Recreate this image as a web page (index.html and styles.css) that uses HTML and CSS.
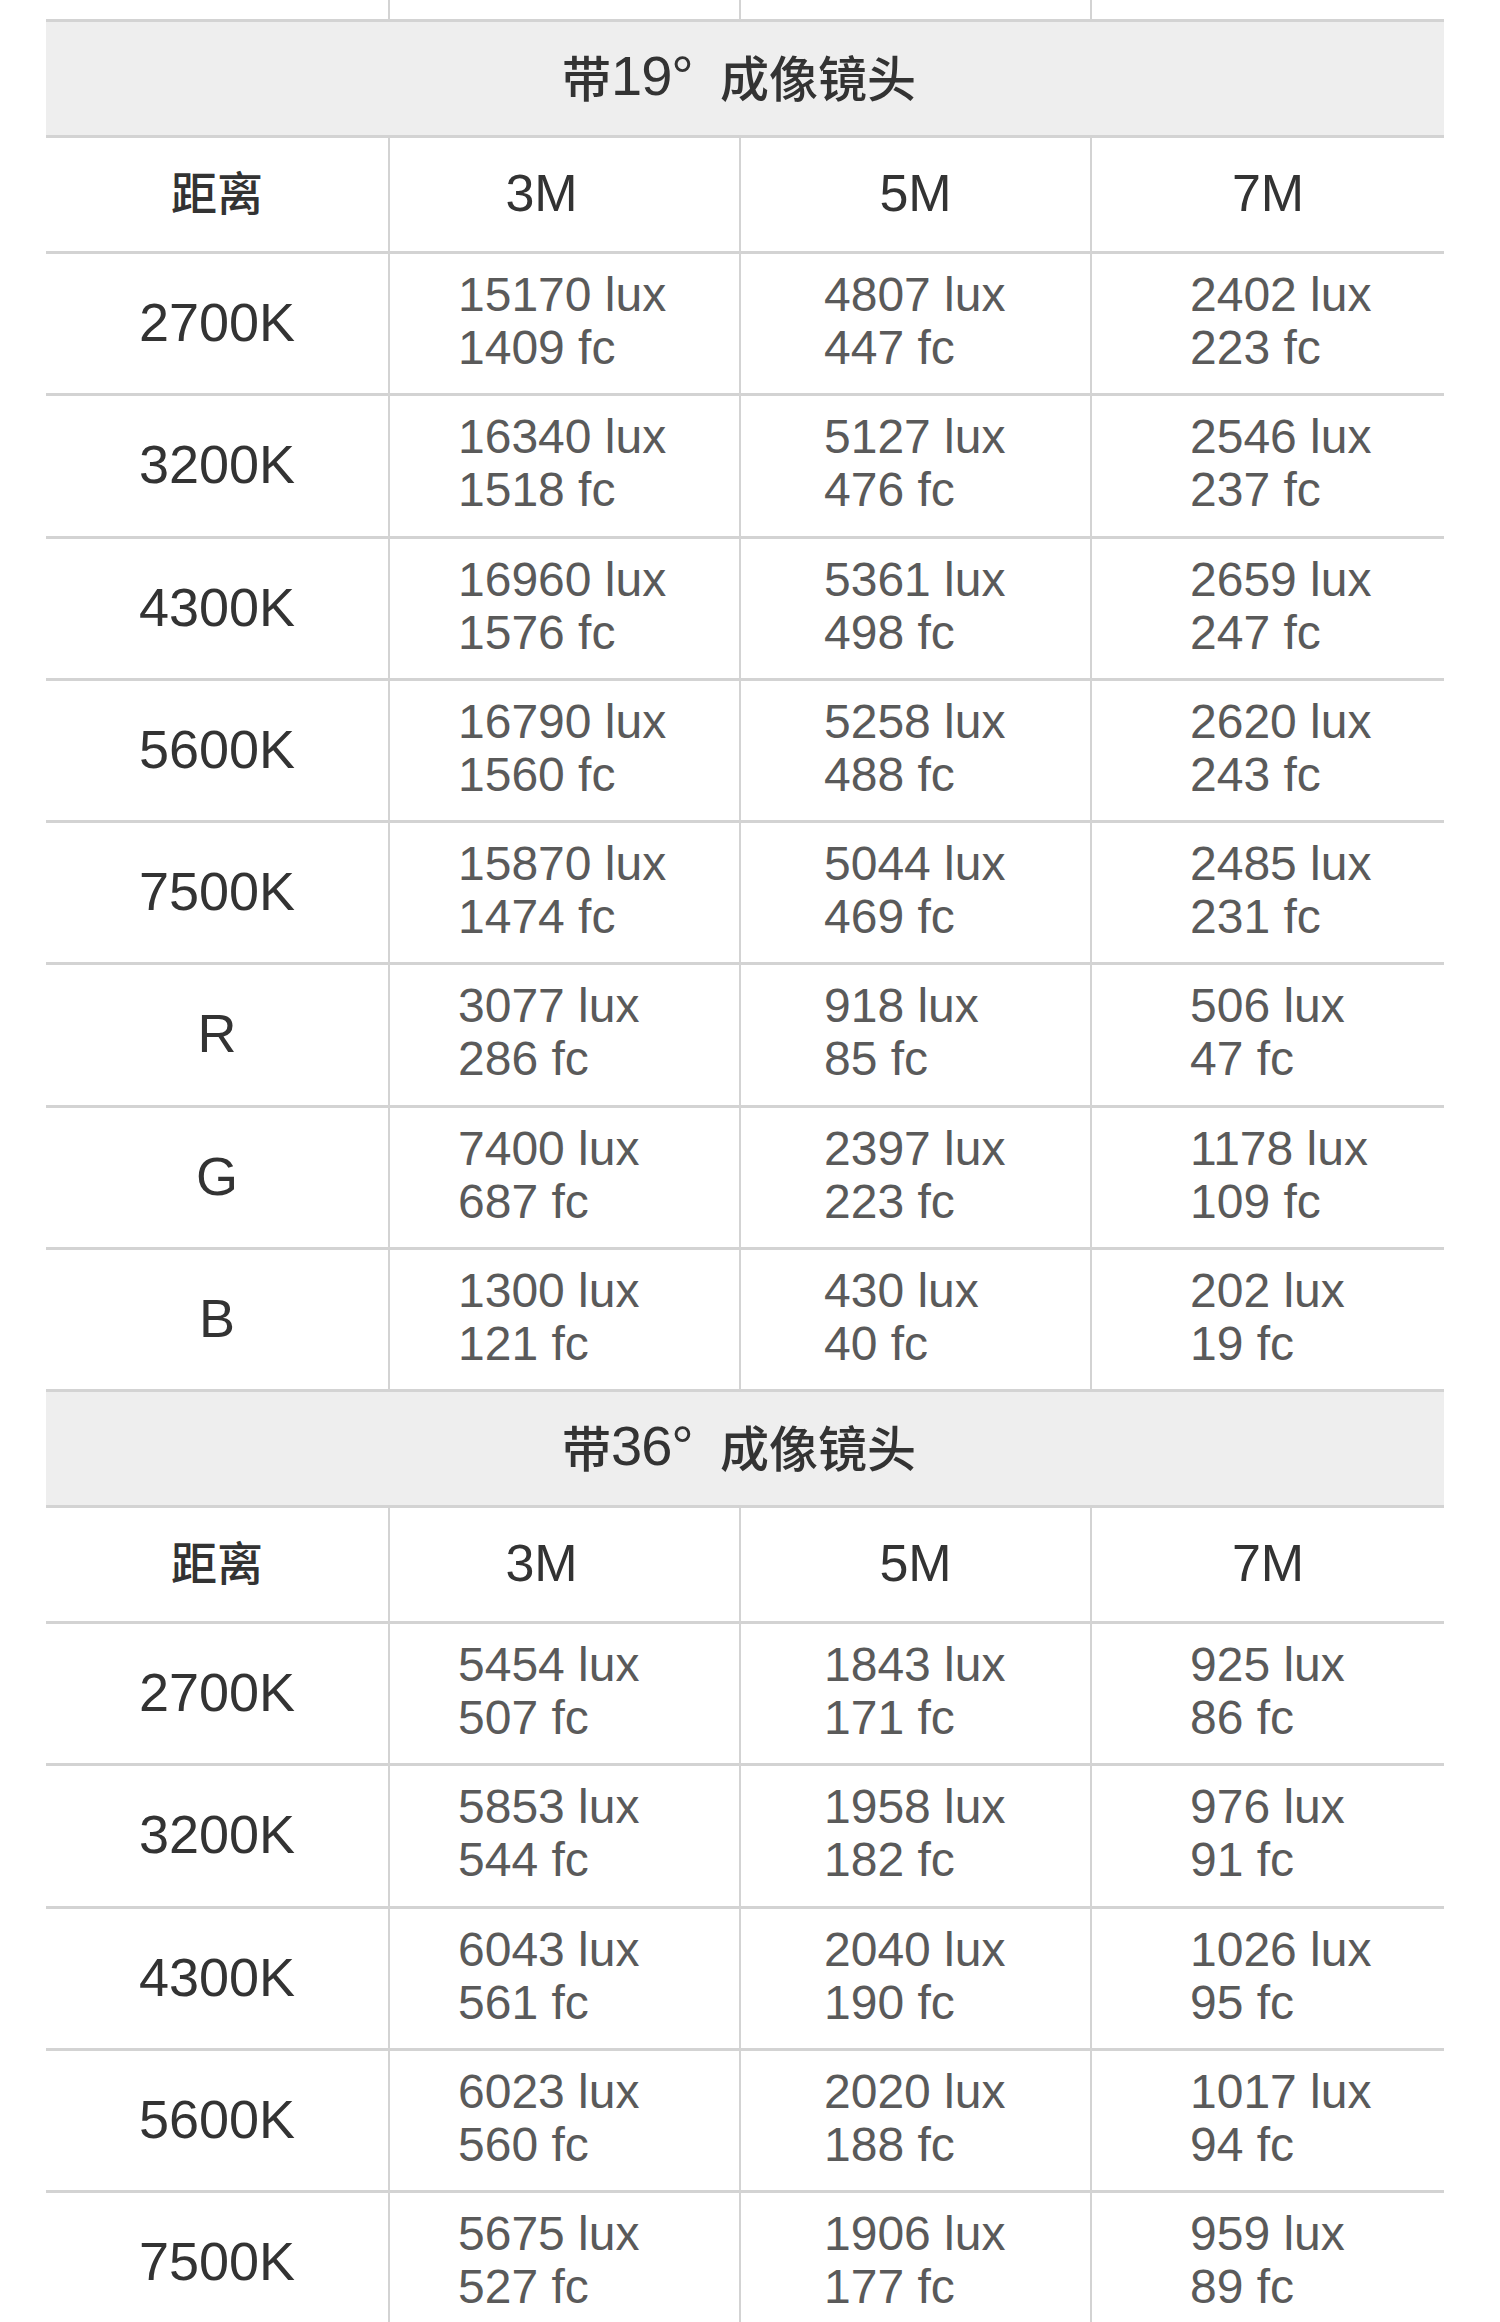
FILE: index.html
```html
<!DOCTYPE html>
<html lang="zh-CN">
<head>
<meta charset="utf-8">
<title>照度表</title>
<link rel="stylesheet" href="styles.css">
</head>
<body>
<div class="page">
  <div class="tbl">
    <div class="row stub"><div class="cell"></div><div class="cell"></div><div class="cell"></div><div class="cell"></div></div>

    <div class="band">带<span class="num">19°</span>&nbsp; 成像镜头</div>
    <div class="row head">
      <div class="cell cjk">距离</div><div class="cell m3">3M</div><div class="cell">5M</div><div class="cell">7M</div>
    </div>
    <div class="row data">
      <div class="cell label">2700K</div>
      <div class="cell val c2"><div>15170 lux<br>1409 fc</div></div>
      <div class="cell val c3"><div>4807 lux<br>447 fc</div></div>
      <div class="cell val c4"><div>2402 lux<br>223 fc</div></div>
    </div>
    <div class="row data">
      <div class="cell label">3200K</div>
      <div class="cell val c2"><div>16340 lux<br>1518 fc</div></div>
      <div class="cell val c3"><div>5127 lux<br>476 fc</div></div>
      <div class="cell val c4"><div>2546 lux<br>237 fc</div></div>
    </div>
    <div class="row data">
      <div class="cell label">4300K</div>
      <div class="cell val c2"><div>16960 lux<br>1576 fc</div></div>
      <div class="cell val c3"><div>5361 lux<br>498 fc</div></div>
      <div class="cell val c4"><div>2659 lux<br>247 fc</div></div>
    </div>
    <div class="row data">
      <div class="cell label">5600K</div>
      <div class="cell val c2"><div>16790 lux<br>1560 fc</div></div>
      <div class="cell val c3"><div>5258 lux<br>488 fc</div></div>
      <div class="cell val c4"><div>2620 lux<br>243 fc</div></div>
    </div>
    <div class="row data">
      <div class="cell label">7500K</div>
      <div class="cell val c2"><div>15870 lux<br>1474 fc</div></div>
      <div class="cell val c3"><div>5044 lux<br>469 fc</div></div>
      <div class="cell val c4"><div>2485 lux<br>231 fc</div></div>
    </div>
    <div class="row data">
      <div class="cell label">R</div>
      <div class="cell val c2"><div>3077 lux<br>286 fc</div></div>
      <div class="cell val c3"><div>918 lux<br>85 fc</div></div>
      <div class="cell val c4"><div>506 lux<br>47 fc</div></div>
    </div>
    <div class="row data">
      <div class="cell label">G</div>
      <div class="cell val c2"><div>7400 lux<br>687 fc</div></div>
      <div class="cell val c3"><div>2397 lux<br>223 fc</div></div>
      <div class="cell val c4"><div>1178 lux<br>109 fc</div></div>
    </div>
    <div class="row data">
      <div class="cell label">B</div>
      <div class="cell val c2"><div>1300 lux<br>121 fc</div></div>
      <div class="cell val c3"><div>430 lux<br>40 fc</div></div>
      <div class="cell val c4"><div>202 lux<br>19 fc</div></div>
    </div>

    <div class="band">带<span class="num">36°</span>&nbsp; 成像镜头</div>
    <div class="row head">
      <div class="cell cjk">距离</div><div class="cell m3">3M</div><div class="cell">5M</div><div class="cell">7M</div>
    </div>
    <div class="row data">
      <div class="cell label">2700K</div>
      <div class="cell val c2"><div>5454 lux<br>507 fc</div></div>
      <div class="cell val c3"><div>1843 lux<br>171 fc</div></div>
      <div class="cell val c4"><div>925 lux<br>86 fc</div></div>
    </div>
    <div class="row data">
      <div class="cell label">3200K</div>
      <div class="cell val c2"><div>5853 lux<br>544 fc</div></div>
      <div class="cell val c3"><div>1958 lux<br>182 fc</div></div>
      <div class="cell val c4"><div>976 lux<br>91 fc</div></div>
    </div>
    <div class="row data">
      <div class="cell label">4300K</div>
      <div class="cell val c2"><div>6043 lux<br>561 fc</div></div>
      <div class="cell val c3"><div>2040 lux<br>190 fc</div></div>
      <div class="cell val c4"><div>1026 lux<br>95 fc</div></div>
    </div>
    <div class="row data">
      <div class="cell label">5600K</div>
      <div class="cell val c2"><div>6023 lux<br>560 fc</div></div>
      <div class="cell val c3"><div>2020 lux<br>188 fc</div></div>
      <div class="cell val c4"><div>1017 lux<br>94 fc</div></div>
    </div>
    <div class="row data">
      <div class="cell label">7500K</div>
      <div class="cell val c2"><div>5675 lux<br>527 fc</div></div>
      <div class="cell val c3"><div>1906 lux<br>177 fc</div></div>
      <div class="cell val c4"><div>959 lux<br>89 fc</div></div>
    </div>
  </div>
</div>
</body>
</html>
```

FILE: styles.css
```css
html, body {
  margin: 0;
  padding: 0;
  background: #ffffff;
}

.page {
  height: 2322px;
  overflow: hidden;
  padding-left: 46px;
  font-family: "Liberation Sans", Arial, "Noto Sans CJK SC", sans-serif;
  color: #333333;
}

.tbl {
  width: 1398px;
}

.row {
  display: grid;
  grid-template-columns: 344px 351px 351px 352px;
  border-bottom: 3px solid #d3d3d3;
  box-sizing: border-box;
}

.cell {
  border-right: 2px solid #d3d3d3;
  box-sizing: border-box;
  display: flex;
  align-items: center;
  justify-content: center;
}

.cell:last-child {
  border-right: none;
}

.stub {
  height: 22px;
}

.band {
  height: 116px;
  box-sizing: border-box;
  background: #eeeeee;
  border-bottom: 3px solid #d3d3d3;
  display: flex;
  align-items: center;
  justify-content: center;
  padding-right: 12px;
  padding-bottom: 7px;
  font-size: 49px;
  font-weight: 500;
  color: #333333;
  white-space: pre;
}

.band .num {
  font-size: 56px;
  font-weight: 400;
  letter-spacing: -1px;
}

.head {
  height: 116px;
  font-size: 52px;
  color: #333333;
}

.head .cell {
  padding-bottom: 3px;
}

.head .cjk {
  font-size: 46px;
  font-weight: 500;
  padding-bottom: 9px;
}

.head .m3 {
  padding-right: 46px;
}

.data {
  height: 142.25px;
}

.label {
  font-size: 54px;
  color: #333333;
  padding-bottom: 3px;
}

.val {
  justify-content: flex-start;
  font-size: 48px;
  line-height: 53px;
  color: #5a5a5a;
  padding-bottom: 5px;
}

.c2 { padding-left: 68px; }
.c3 { padding-left: 83px; }
.c4 { padding-left: 98px; }
```
